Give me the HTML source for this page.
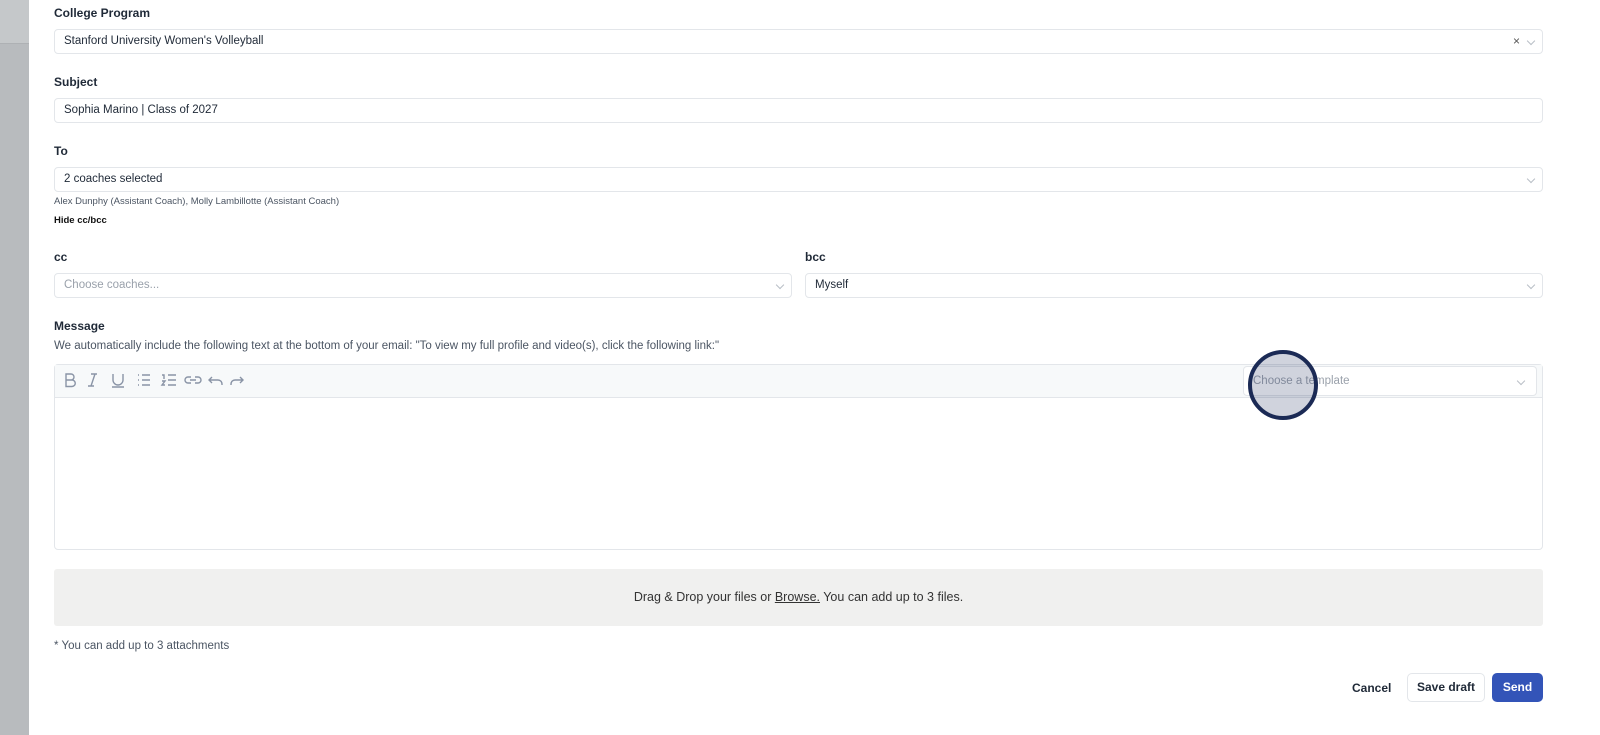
<!DOCTYPE html><html><head><style>
body{margin:0;width:1600px;height:735px;overflow:hidden;background:#fff;font-family:"Liberation Sans",sans-serif;color:#1f2937;position:relative}
.side{position:absolute;left:0;top:0;width:29px;height:735px;background:#b8bbbe}
.side .t{height:43px;background:#c5c8ca;border-bottom:1px solid #aeb1b4}
.l{position:absolute;left:54px;font-size:12px;font-weight:bold;color:#1f2937}
.in{position:absolute;height:23px;border:1px solid #e3e6ea;border-radius:4px;font-size:11.5px;line-height:23px;padding-left:9px;box-sizing:border-box;height:25px;color:#1f2937}
.ch{position:absolute;right:8px;top:8px;width:5px;height:5px;border-right:1px solid #b8bec6;border-bottom:1px solid #b8bec6;transform:rotate(45deg)}
.ph{color:#9aa1ab}
.s{position:absolute;left:54px;font-size:9.5px;color:#4b5563}
.ic{position:absolute;top:372px}
</style></head><body>
<div class="side"><div class="t"></div></div>
<div class="l" style="top:6px">College Program</div>
<div class="in" style="left:54px;top:29px;width:1489px">Stanford University Women's Volleyball<span style="position:absolute;right:22px;color:#555;font-size:12px">×</span><div class="ch"></div></div>
<div class="l" style="top:75px">Subject</div>
<div class="in" style="left:54px;top:98px;width:1489px">Sophia Marino | Class of 2027</div>
<div class="l" style="top:144px">To</div>
<div class="in" style="left:54px;top:167px;width:1489px">2 coaches selected<div class="ch"></div></div>
<div class="s" style="top:196px">Alex Dunphy (Assistant Coach), Molly Lambillotte (Assistant Coach)</div>
<div class="s" style="top:215px;font-weight:bold;color:#111">Hide cc/bcc</div>
<div class="l" style="top:250px">cc</div>
<div class="l" style="top:250px;left:805px">bcc</div>
<div class="in" style="left:54px;top:273px;width:738px"><span class="ph">Choose coaches...</span><div class="ch"></div></div>
<div class="in" style="left:805px;top:273px;width:738px">Myself<div class="ch"></div></div>
<div class="l" style="top:319px">Message</div>
<div style="position:absolute;left:54px;top:340px;font-size:11.5px;color:#4b5563">We automatically include the following text at the bottom of your email: "To view my full profile and video(s), click the following link:"</div>
<div style="position:absolute;left:54px;top:364px;width:1489px;height:186px;border:1px solid #e3e6ea;border-radius:4px;box-sizing:border-box">
<div style="height:32px;background:#f7f9fa;border-bottom:1px solid #e3e6ea"></div></div>
<svg style="position:absolute;left:60px;top:371px" width="200" height="18" fill="none" stroke="#8a94a6" stroke-width="1.4">
<path d="M6 3h5a3 3 0 0 1 0 6H6zM6 9h6a3.2 3.2 0 0 1 0 6.5H6z"/>
<path d="M31 3h6M28 15h6M35 3l-4 12"/>
<path d="M53 3v6a5 5 0 0 0 10 0V3M52 16h12"/>
<path d="M78 4h1M78 9h1M78 14h1M82 4h8M82 9h8M82 14h8"/>
<path d="M102 4h2v4M102 10h3l-3 4h3M108 4h8M108 9h8M108 14h8"/>
<path d="M131 6h-3a3 3 0 0 0 0 6h3M135 6h3a3 3 0 0 1 0 6h-3M130 9h6"/>
<path d="M152 6l-3 3 3 3M149 9h9a4 4 0 0 1 4 4v1"/>
<path d="M180 6l3 3-3 3M183 9h-8a4 4 0 0 0-4 4v1"/>
</svg>
<div class="in" style="left:1243px;top:366px;width:294px;height:30px;line-height:28px;background:#fff"><span class="ph">Choose a template</span><div class="ch" style="top:11px;right:12px"></div></div>
<div style="position:absolute;left:1248px;top:350px;width:62px;height:62px;border:4px solid #1b2a55;border-radius:50%;background:rgba(40,55,100,.22)"></div>
<div style="position:absolute;left:54px;top:569px;width:1489px;height:57px;background:#f0f0ef;border-radius:3px;text-align:center;line-height:57px;font-size:12.5px;color:#333">Drag &amp; Drop your files or <u>Browse.</u> You can add up to 3 files.</div>
<div style="position:absolute;left:54px;top:640px;font-size:11.5px;color:#4b5563">* You can add up to 3 attachments</div>
<div style="position:absolute;left:1352px;top:681px;font-size:12px;font-weight:bold;color:#1f2937">Cancel</div>
<div style="position:absolute;left:1407px;top:673px;width:78px;height:29px;border:1px solid #e3e6ea;border-radius:5px;box-sizing:border-box;text-align:center;line-height:27px;font-size:12px;font-weight:bold">Save draft</div>
<div style="position:absolute;left:1492px;top:673px;width:51px;height:29px;background:#3354b8;border-radius:5px;text-align:center;line-height:29px;font-size:12px;font-weight:bold;color:#fff">Send</div>
</body></html>
